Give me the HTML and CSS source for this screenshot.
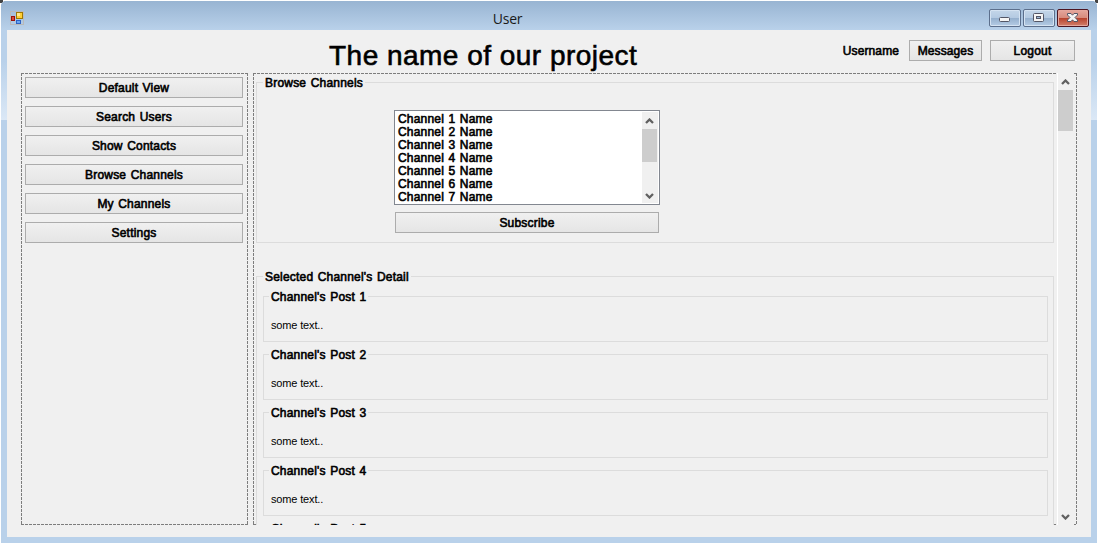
FILE: index.html
```html
<!DOCTYPE html>
<html lang="en">
<head>
<meta charset="utf-8">
<title>User</title>
<link rel="stylesheet" href="styles.css">
</head>
<body>
<div class="window">
  <header class="titlebar">
    <svg class="app-icon" width="14" height="14" viewBox="0 0 14 14" shape-rendering="crispEdges">
      <path d="M.5.5h13v13H.5z" fill="none" stroke="#b9b9b9"/>
      <path d="M6.500 1.500h6v6h-6z" fill="#ffcf35" stroke="#a07800"/>
      <path d="M7 2h3v3H7z" fill="#ffe88c"/>
      <path d="M1.500 5.500h3v4h-3z" fill="#d84a3a" stroke="#9c1208"/>
      <path d="M6.500 9.500h4v3h-4z" fill="#6aa5f2" stroke="#2d62c4"/>
    </svg>
    <span class="caption">User</span>
    <div class="controls">
      <button class="control" aria-label="Minimize"><svg width="32" height="18" viewBox="0 0 32 18"><rect x="10.5" y="8.5" width="10" height="4" rx="1" fill="#f5f5f5" stroke="#535666"/></svg></button>
      <button class="control" aria-label="Maximize"><svg width="32" height="18" viewBox="0 0 32 18"><rect x="10.5" y="4.5" width="10" height="8" rx="1" fill="#f5f5f5" stroke="#535666"/><rect x="13.5" y="7.5" width="4" height="2" fill="#9db8d6" stroke="#535666"/></svg></button>
      <button class="control close" aria-label="Close"><svg width="32" height="18" viewBox="0 0 32 18"><path d="M10.500 4.500h3.500l1.500 1.700 1.500-1.700h3.500v1.500l-2.500 2.500 2.500 2.500v1.500h-3.500l-1.500-1.700-1.500 1.700h-3.500v-1.500l2.500-2.500-2.500-2.500z" fill="#f5f5f5" stroke="#535666"/></svg></button>
    </div>
  </header>
  <main class="client">
    <div class="topbar">
      <h1 class="title">The name of our project</h1>
      <div class="account">
        <span class="username">Username</span>
        <button class="btn messages">Messages</button>
        <button class="btn logout">Logout</button>
      </div>
    </div>
    <div class="panels">
      <nav class="sidebar dashed">
        <button class="btn">Default View</button>
        <button class="btn">Search Users</button>
        <button class="btn">Show Contacts</button>
        <button class="btn">Browse Channels</button>
        <button class="btn">My Channels</button>
        <button class="btn">Settings</button>
      </nav>
      <section class="content dashed">
        <div class="view">
          <div class="group browse">
            <span class="legend">Browse Channels</span>
            <div class="picker">
              <div class="listbox">
                <ul class="channels">
                  <li>Channel 1 Name</li><li>Channel 2 Name</li><li>Channel 3 Name</li><li>Channel 4 Name</li><li>Channel 5 Name</li><li>Channel 6 Name</li><li>Channel 7 Name</li>
                </ul>
                <div class="scroll list-scroll">
                  <svg class="arrow" width="9" height="6" viewBox="0 0 9 6"><path d="M1 5l3.500-3.500L8 5" fill="none" stroke="#606060" stroke-width="2.300"/></svg>
                  <div class="thumb"></div>
                  <svg class="arrow" width="9" height="6" viewBox="0 0 9 6"><path d="M1 1l3.500 3.500L8 1" fill="none" stroke="#606060" stroke-width="2.300"/></svg>
                </div>
              </div>
              <button class="btn subscribe">Subscribe</button>
            </div>
          </div>
          <div class="group detail">
            <span class="legend">Selected Channel's Detail</span>
            <div class="group post"><span class="legend">Channel's Post 1</span><p>some text..</p></div>
            <div class="group post"><span class="legend">Channel's Post 2</span><p>some text..</p></div>
            <div class="group post"><span class="legend">Channel's Post 3</span><p>some text..</p></div>
            <div class="group post"><span class="legend">Channel's Post 4</span><p>some text..</p></div>
            <div class="group post"><span class="legend">Channel's Post 5</span></div>
          </div>
        </div>
        <div class="scroll main-scroll">
          <svg class="arrow" width="9" height="6" viewBox="0 0 9 6"><path d="M1 5l3.500-3.500L8 5" fill="none" stroke="#606060" stroke-width="2.300"/></svg>
          <div class="thumb"></div>
          <svg class="arrow" width="9" height="6" viewBox="0 0 9 6"><path d="M1 1l3.500 3.500L8 1" fill="none" stroke="#606060" stroke-width="2.300"/></svg>
        </div>
      </section>
    </div>
  </main>
</div>
</body>
</html>
```
FILE: styles.css
```css
* { box-sizing: border-box; }
body {
  margin: 0;
  padding: 1px 1px 0;
  height: 543px;
  overflow: hidden;
  background:
    linear-gradient(#444, #444) left top / 3px 3px no-repeat,
    linear-gradient(#444, #444) right top / 3px 3px no-repeat,
    #fff;
  color: #000;
  font: 12px/13px "Liberation Sans", Arial, sans-serif;
}
.window {
  height: 542px;
  padding: 0 6px 6px;
  border-radius: 5px 5px 0 0;
  background:
    linear-gradient(#98b4d2, #b9d1ea 29px, #b9d1ea 60px, #dbe8f6 119px, #b9d1ea 119px);
}
.titlebar {
  display: flex;
  align-items: flex-start;
  justify-content: space-between;
  height: 29px;
  margin: 0 -6px;
  padding: 0 8px 0 9px;
  border-radius: 5px 5px 0 0;
  background: linear-gradient(#98b4d2, #b9d1ea);
}
.app-icon { margin-top: 10px; }
.caption {
  margin: 9px 0 0 2px;
  color: #1a1a1a;
  font: 14px/18px "Open Sans", sans-serif;
  letter-spacing: -0.3px;
}
.controls { display: flex; gap: 2px; margin-top: 8px; }
.control {
  width: 32px;
  height: 18px;
  padding: 0;
  border: 1px solid #5c6f8c;
  border-radius: 2px;
  background: linear-gradient(#c4d6e9, #b4cae2 48%, #94afcd 50%, #b5cce5);
  box-shadow: inset 0 0 0 1px #d5e3f2;
}
.control svg { display: block; margin: -1px; }
.close {
  border-color: #4c1521;
  background: linear-gradient(#e5a79d, #d78b7d 48%, #b7402b 50%, #d2806c);
  box-shadow: inset 0 0 0 1px #e5a79d;
}
.client {
  height: 507px;
  padding: 0 14px 12px;
  background: #f0f0f0;
}
.topbar {
  display: flex;
  justify-content: space-between;
  height: 43px;
  padding: 10px 2px 0 308px;
}
.title {
  margin: 0;
  font-size: 28px;
  font-weight: 400;
  line-height: 32px;
  letter-spacing: 0.48px;
  white-space: nowrap;
  -webkit-text-stroke: 0.6px #000;
}
.account { display: flex; }
.username, .btn, .legend, .channels {
  font-size: 12px;
  line-height: 13px;
  letter-spacing: 0.2px;
  word-spacing: 0.9px;
  white-space: nowrap;
  -webkit-text-stroke: 0.6px #000;
}
.username { margin: 5px 10px 0 0; letter-spacing: 0.1px; }
.btn {
  height: 21px;
  padding: 1px 0 0;
  border: 1px solid #acacac;
  background: linear-gradient(#f0f0f0, #e5e5e5);
  color: #000;
  font-family: inherit;
}
.messages { width: 73px; margin-right: 8px; letter-spacing: 0.1px; }
.logout { width: 85px; }
.panels { display: flex; gap: 5px; height: 452px; }
.dashed {
  background:
    repeating-linear-gradient(90deg, #7d7d7d 0 3px, transparent 3px 4px) top / 100% 1px no-repeat,
    repeating-linear-gradient(90deg, #7d7d7d 0 3px, transparent 3px 4px) bottom / 100% 1px no-repeat,
    repeating-linear-gradient(#7d7d7d 0 3px, transparent 3px 4px) left / 1px 100% no-repeat,
    repeating-linear-gradient(#7d7d7d 0 3px, transparent 3px 4px) right / 1px 100% no-repeat;
}
.sidebar {
  display: flex;
  flex-direction: column;
  gap: 8px;
  width: 227px;
  padding: 4px 5px 0 4px;
}
.sidebar .btn { flex: none; }
.content { display: flex; width: 824px; padding-left: 3px; }
.view {
  display: flow-root;
  width: 798px;
  height: 451px;
  margin: 1px 3px 0 0;
  overflow: hidden;
  background: #f0f0f0;
}
.group { border: 1px solid #dcdcdc; }
.legend {
  display: block;
  width: max-content;
  padding: 1px 2px 0;
  background: #f0f0f0;
}
.browse { width: 798px; height: 161px; margin-top: 8px; }
.browse > .legend { margin: -7px 0 0 6px; }
.picker { width: 266px; margin: 20px 0 0 137px; }
.listbox {
  display: flex;
  justify-content: space-between;
  height: 95px;
  padding: 1px;
  border: 1px solid #828790;
  background: #fff;
}
.channels { margin: 0; padding: 1px 0 0 2px; list-style: none; }
.subscribe { display: block; width: 264px; margin: 7px 1px 0; }
.scroll {
  display: flex;
  flex-direction: column;
  align-items: center;
  background: #f0f0f0;
}
.scroll .thumb { width: 100%; background: #cdcdcd; }
.scroll .arrow:last-child { margin-top: auto; }
.list-scroll { width: 16px; padding: 6px 1px 4px 0; }
.list-scroll .thumb { height: 33px; margin-top: 5px; }
.main-scroll {
  width: 17px;
  padding: 6px 1px 5px 0;
  border-left: 1px solid #fff;
}
.main-scroll .thumb { height: 41px; margin-top: 5px; }
.detail { width: 798px; height: 500px; margin-top: 33px; padding-left: 6px; }
.detail > .legend { margin-top: -7px; }
.post { width: 785px; height: 46px; margin-top: 12px; }
.detail > .legend + .post { margin-top: 12px; }
.post .legend { margin: -7px 0 0 5px; }
.post p {
  margin: 15px 0 0 7px;
  font-size: 11px;
  line-height: 13px;
  letter-spacing: -0.15px;
}
```
